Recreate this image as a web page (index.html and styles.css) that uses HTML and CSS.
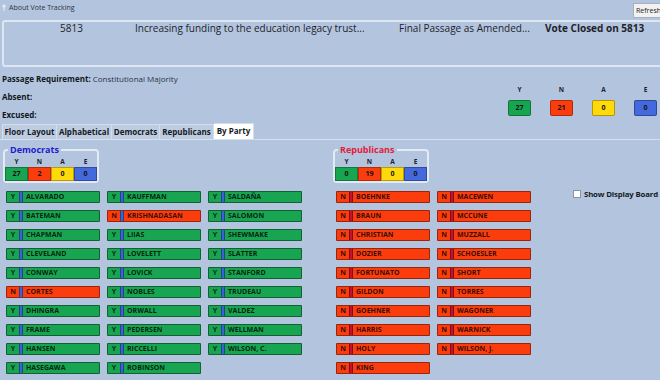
FILE: index.html
```html
<!DOCTYPE html>
<html>
<head>
<meta charset="utf-8">
<link rel="stylesheet" href="styles.css">
</head>
<body>
<div class="app">
  <div class="titlebar">
    <span class="ttl"><svg class="pin" width="4" height="7" viewBox="0 0 4 7"><circle cx="2" cy="2" r="1.6" fill="#e8eef6"/><rect x="1.5" y="3" width="1" height="4" fill="#e8eef6"/></svg>About Vote Tracking</span>
    <button class="refresh">Refresh</button>
  </div>

  <div class="billbox">
    <span class="c-num">5813</span>
    <span class="c-desc">Increasing funding to the education legacy trust...</span>
    <span class="c-act">Final Passage as Amended...</span>
    <span class="c-status">Vote Closed on 5813</span>
  </div>

  <div class="info">
    <div class="reqs">
      <div class="line"><b>Passage Requirement:</b> Constitutional Majority</div>
      <div class="line"><b>Absent:</b></div>
      <div class="line"><b>Excused:</b></div>
    </div>
    <div class="totals">
      <span class="tl">Y</span><span class="tl">N</span><span class="tl">A</span><span class="tl">E</span>
      <span class="tb y">27</span><span class="tb n">21</span><span class="tb a">0</span><span class="tb e">0</span>
    </div>
  </div>

  <div class="tabs">
    <span class="tab w55">Floor Layout</span>
    <span class="tab w55">Alphabetical</span>
    <span class="tab w48">Democrats</span>
    <span class="tab w54">Republicans</span>
    <span class="tab w40 sel">By Party</span>
  </div>

  <div class="main">
    <section class="party dem">
      <fieldset class="group">
        <legend>Democrats</legend>
        <div class="gt">
          <span class="gl">Y</span><span class="gl">N</span><span class="gl">A</span><span class="gl">E</span>
          <span class="gb y">27</span><span class="gb n">2</span><span class="gb a">0</span><span class="gb e">0</span>
        </div>
      </fieldset>
      <div class="chips">
        <div class="chip y"><span class="v">Y</span><span class="bar"></span><span class="nm">ALVARADO</span></div>
        <div class="chip y"><span class="v">Y</span><span class="bar"></span><span class="nm">BATEMAN</span></div>
        <div class="chip y"><span class="v">Y</span><span class="bar"></span><span class="nm">CHAPMAN</span></div>
        <div class="chip y"><span class="v">Y</span><span class="bar"></span><span class="nm">CLEVELAND</span></div>
        <div class="chip y"><span class="v">Y</span><span class="bar"></span><span class="nm">CONWAY</span></div>
        <div class="chip n"><span class="v">N</span><span class="bar"></span><span class="nm">CORTES</span></div>
        <div class="chip y"><span class="v">Y</span><span class="bar"></span><span class="nm">DHINGRA</span></div>
        <div class="chip y"><span class="v">Y</span><span class="bar"></span><span class="nm">FRAME</span></div>
        <div class="chip y"><span class="v">Y</span><span class="bar"></span><span class="nm">HANSEN</span></div>
        <div class="chip y"><span class="v">Y</span><span class="bar"></span><span class="nm">HASEGAWA</span></div>
        <div class="chip y"><span class="v">Y</span><span class="bar"></span><span class="nm">KAUFFMAN</span></div>
        <div class="chip n"><span class="v">N</span><span class="bar"></span><span class="nm">KRISHNADASAN</span></div>
        <div class="chip y"><span class="v">Y</span><span class="bar"></span><span class="nm">LIIAS</span></div>
        <div class="chip y"><span class="v">Y</span><span class="bar"></span><span class="nm">LOVELETT</span></div>
        <div class="chip y"><span class="v">Y</span><span class="bar"></span><span class="nm">LOVICK</span></div>
        <div class="chip y"><span class="v">Y</span><span class="bar"></span><span class="nm">NOBLES</span></div>
        <div class="chip y"><span class="v">Y</span><span class="bar"></span><span class="nm">ORWALL</span></div>
        <div class="chip y"><span class="v">Y</span><span class="bar"></span><span class="nm">PEDERSEN</span></div>
        <div class="chip y"><span class="v">Y</span><span class="bar"></span><span class="nm">RICCELLI</span></div>
        <div class="chip y"><span class="v">Y</span><span class="bar"></span><span class="nm">ROBINSON</span></div>
        <div class="chip y"><span class="v">Y</span><span class="bar"></span><span class="nm">SALDAÑA</span></div>
        <div class="chip y"><span class="v">Y</span><span class="bar"></span><span class="nm">SALOMON</span></div>
        <div class="chip y"><span class="v">Y</span><span class="bar"></span><span class="nm">SHEWMAKE</span></div>
        <div class="chip y"><span class="v">Y</span><span class="bar"></span><span class="nm">SLATTER</span></div>
        <div class="chip y"><span class="v">Y</span><span class="bar"></span><span class="nm">STANFORD</span></div>
        <div class="chip y"><span class="v">Y</span><span class="bar"></span><span class="nm">TRUDEAU</span></div>
        <div class="chip y"><span class="v">Y</span><span class="bar"></span><span class="nm">VALDEZ</span></div>
        <div class="chip y"><span class="v">Y</span><span class="bar"></span><span class="nm">WELLMAN</span></div>
        <div class="chip y"><span class="v">Y</span><span class="bar"></span><span class="nm">WILSON, C.</span></div>
      </div>
    </section>

    <section class="party rep">
      <fieldset class="group">
        <legend>Republicans</legend>
        <div class="gt">
          <span class="gl">Y</span><span class="gl">N</span><span class="gl">A</span><span class="gl">E</span>
          <span class="gb y">0</span><span class="gb n">19</span><span class="gb a">0</span><span class="gb e">0</span>
        </div>
      </fieldset>
      <div class="chips">
        <div class="chip n"><span class="v">N</span><span class="bar"></span><span class="nm">BOEHNKE</span></div>
        <div class="chip n"><span class="v">N</span><span class="bar"></span><span class="nm">BRAUN</span></div>
        <div class="chip n"><span class="v">N</span><span class="bar"></span><span class="nm">CHRISTIAN</span></div>
        <div class="chip n"><span class="v">N</span><span class="bar"></span><span class="nm">DOZIER</span></div>
        <div class="chip n"><span class="v">N</span><span class="bar"></span><span class="nm">FORTUNATO</span></div>
        <div class="chip n"><span class="v">N</span><span class="bar"></span><span class="nm">GILDON</span></div>
        <div class="chip n"><span class="v">N</span><span class="bar"></span><span class="nm">GOEHNER</span></div>
        <div class="chip n"><span class="v">N</span><span class="bar"></span><span class="nm">HARRIS</span></div>
        <div class="chip n"><span class="v">N</span><span class="bar"></span><span class="nm">HOLY</span></div>
        <div class="chip n"><span class="v">N</span><span class="bar"></span><span class="nm">KING</span></div>
        <div class="chip n"><span class="v">N</span><span class="bar"></span><span class="nm">MACEWEN</span></div>
        <div class="chip n"><span class="v">N</span><span class="bar"></span><span class="nm">MCCUNE</span></div>
        <div class="chip n"><span class="v">N</span><span class="bar"></span><span class="nm">MUZZALL</span></div>
        <div class="chip n"><span class="v">N</span><span class="bar"></span><span class="nm">SCHOESLER</span></div>
        <div class="chip n"><span class="v">N</span><span class="bar"></span><span class="nm">SHORT</span></div>
        <div class="chip n"><span class="v">N</span><span class="bar"></span><span class="nm">TORRES</span></div>
        <div class="chip n"><span class="v">N</span><span class="bar"></span><span class="nm">WAGONER</span></div>
        <div class="chip n"><span class="v">N</span><span class="bar"></span><span class="nm">WARNICK</span></div>
        <div class="chip n"><span class="v">N</span><span class="bar"></span><span class="nm">WILSON, J.</span></div>
      </div>
    </section>

    <label class="board"><span class="cb"></span>Show Display Board</label>
  </div>
</div>
</body>
</html>
```

FILE: styles.css
```css
html, body {
  margin: 0;
  padding: 0;
  height: 100%;
  overflow: hidden;
}
body {
  background: #b3c5de;
  font-family: "Open Sans", "Noto Sans", sans-serif;
  color: #1b1f26;
}
.app {
  width: 660px;
}

/* title bar */
.titlebar {
  display: flex;
  justify-content: space-between;
  align-items: flex-start;
  height: 20px;
}
.ttl {
  display: flex;
  align-items: center;
  gap: 3px;
  font-size: 7px;
  line-height: 9px;
  color: #2d3340;
  padding: 3px 0 0 2px;
}
.refresh {
  margin: 3px -4px 0 0;
  width: 31px;
  height: 15px;
  padding: 0 0 0 2px;
  text-align: left;
  font-family: inherit;
  font-size: 7px;
  color: #222;
  background: #f2f2f2;
  border: 1px solid #a9b0ba;
  border-radius: 0;
}

/* bill header */
.billbox {
  display: flex;
  box-sizing: border-box;
  height: 47px;
  margin: 0 -8px 0 2px;
  padding: 0 0 0 56px;
  border: 2px solid #dde6f1;
  border-radius: 3px;
  font-size: 10px;
  line-height: 12px;
  color: #1e232b;
}
.c-num { width: 75px; }
.c-desc { width: 264px; }
.c-act { width: 146px; }
.c-status { font-weight: 700; }

/* info area */
.info {
  display: flex;
  justify-content: space-between;
  height: 52px;
  margin-top: 3px;
  padding-left: 2px;
}
.reqs {
  font-size: 8px;
  color: #2a3344;
}
.reqs .line {
  height: 18px;
  line-height: 17px;
}
.reqs b {
  color: #111820;
}
.totals {
  display: grid;
  grid-template-columns: repeat(4, 23px);
  grid-template-rows: 10px 16px;
  column-gap: 19px;
  row-gap: 5px;
  margin: 15px 3px 0 0;
}
.tl {
  font-size: 6.5px;
  font-weight: 700;
  text-align: center;
  line-height: 10px;
  color: #1c2230;
}
.tb {
  box-sizing: border-box;
  border: 1px solid rgba(0, 0, 0, 0.3);
  border-radius: 2px;
  font-size: 7px;
  font-weight: 700;
  text-align: center;
  line-height: 14px;
  color: #111;
}
.y { background: #18a551; }
.n { background: #fb3d0d; }
.a { background: #ffda0a; }
.e { background: #4469dd; }

/* tabs */
.tabs {
  display: flex;
  align-items: flex-end;
  height: 17px;
  padding-left: 2px;
  border-bottom: 1px solid #d7e1ee;
}
.tab {
  box-sizing: border-box;
  height: 15px;
  line-height: 14px;
  font-size: 8px;
  font-weight: 700;
  text-align: center;
  color: #151a22;
  background: #bdcce1;
  border: 1px solid #d4deeb;
  border-bottom: none;
  border-left: none;
}
.tab:first-child { border-left: 1px solid #d4deeb; }
.tab.sel {
  background: #ffffff;
  height: 16px;
}
.w55 { width: 55px; }
.w48 { width: 48px; }
.w54 { width: 54px; }
.w40 { width: 40px; }

/* main area */
.main {
  display: flex;
  align-items: flex-start;
  padding-top: 4px;
}
.party {
  box-sizing: border-box;
  flex-shrink: 0;
}
.dem {
  width: 333px;
  padding-left: 3px;
}
.rep {
  width: 240px;
}
.group {
  box-sizing: border-box;
  width: 96px;
  margin: 0;
  padding: 0;
  border: 2px solid #e3eaf4;
  border-radius: 4px;
}
.group legend {
  margin-left: 3px;
  padding: 0 2px;
  font-size: 9px;
  font-weight: 700;
  line-height: 11px;
}
.dem legend { color: #1d1dcc; }
.rep legend { color: #e2203c; }
.gt {
  display: grid;
  grid-template-columns: repeat(4, 23px);
  grid-template-rows: 12px 14px;
}
.gl {
  font-size: 6.5px;
  font-weight: 700;
  text-align: center;
  line-height: 14px;
  color: #1c2230;
}
.gb {
  box-sizing: border-box;
  border: 1px solid rgba(0, 0, 0, 0.28);
  font-size: 7px;
  font-weight: 700;
  text-align: center;
  line-height: 12px;
  color: #111;
}

/* member chips */
.chips {
  display: grid;
  grid-auto-flow: column;
  grid-template-rows: repeat(10, 12px);
  grid-auto-columns: 94px;
  row-gap: 7px;
  column-gap: 7px;
  margin: 8px 0 0 3px;
}
.chip {
  display: flex;
  box-sizing: border-box;
  height: 12px;
  border: 1px solid rgba(20, 40, 25, 0.55);
  border-radius: 1px;
  font-size: 7px;
  font-weight: 700;
  line-height: 10px;
  color: rgba(0, 0, 0, 0.8);
}
.chip.n {
  border-color: rgba(90, 20, 10, 0.6);
}
.chip .v {
  width: 12px;
  text-align: center;
}
.chip .bar {
  width: 2px;
  border-left: 1px solid rgba(0, 0, 0, 0.35);
  border-right: 1px solid rgba(0, 0, 0, 0.35);
}
.dem .bar { background: #3c63d6; }
.rep .bar { background: #c3122e; }
.chip .nm {
  padding-left: 3px;
  white-space: nowrap;
}

/* display board checkbox */
.board {
  display: flex;
  align-items: center;
  gap: 3px;
  margin-top: 45px;
  font-size: 7.8px;
  font-weight: 700;
  letter-spacing: -0.15px;
  line-height: 10px;
  color: #151a22;
  white-space: nowrap;
}
.cb {
  box-sizing: border-box;
  width: 8px;
  height: 8px;
  background: #fff;
  border: 1px solid #8a94a3;
}
```
